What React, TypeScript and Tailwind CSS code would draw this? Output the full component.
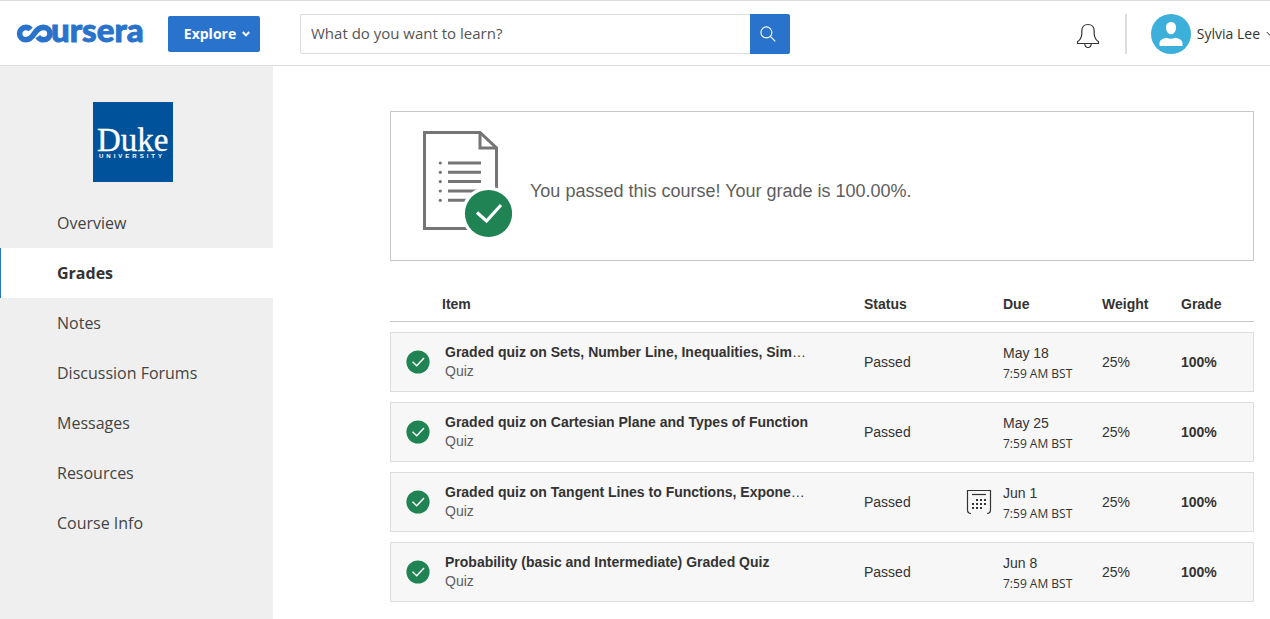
import type { ReactNode } from "react";

type Quiz = { title: string; date: string; shortened?: boolean; rescheduled?: boolean };

const QUIZZES: Quiz[] = [
  { title: "Graded quiz on Sets, Number Line, Inequalities, Sim", date: "May 18", shortened: true },
  { title: "Graded quiz on Cartesian Plane and Types of Function", date: "May 25" },
  { title: "Graded quiz on Tangent Lines to Functions, Expone", date: "Jun 1", shortened: true, rescheduled: true },
  { title: "Probability (basic and Intermediate) Graded Quiz", date: "Jun 8" },
];

const NAV = ["Overview", "Grades", "Notes", "Discussion Forums", "Messages", "Resources", "Course Info"];

function CourseraLogo() {
  return (
    <svg width="128" height="20" viewBox="0 0 128 20" role="img" aria-label="Coursera" className="block shrink-0 overflow-visible">
      <path
        d="M14.600 5.500C13.400 4.100 11.700 3.400 9.900 3.400C6.300 3.400 3.600 6.200 3.600 9.600C3.600 13 6.300 15.800 9.900 15.800C13.600 15.800 15.900 13.500 18.400 9.600C20.800 5.800 23.300 3.400 27.600 3.400C31.300 3.400 34 6.200 34 9.600C34 13 31.300 15.800 27.600 15.800C25.300 15.800 23.300 14.900 21.800 12.600"
        fill="none"
        stroke="#2a73cc"
        strokeWidth="5.600"
      />
      <text x="35" y="18" fill="#2a73cc" stroke="#2a73cc" strokeWidth="0.900" className="font-['Lato',sans-serif] text-[33px] font-black">
        ursera
      </text>
    </svg>
  );
}

function DukeLogo() {
  return (
    <svg width="80" height="80" viewBox="0 0 80 80" role="img" aria-label="Duke University">
      <rect width="80" height="80" fill="#00539b" />
      <text x="4" y="49" fill="#fff" stroke="#fff" strokeWidth="0.300" className="font-['Liberation_Serif',serif] text-[33px]">Duke</text>
      <text x="6" y="56" fill="#fff" className="font-['Liberation_Sans',sans-serif] text-[6px] font-bold tracking-[3px]">UNIVERSITY</text>
    </svg>
  );
}

function BellIcon() {
  return (
    <svg width="24" height="26" viewBox="0 0 24 26" fill="none" stroke="#333" strokeWidth="1.200" aria-hidden="true">
      <path d="M1.500 20.500V18.800C4.600 16.600 5.600 14.500 5.800 11V8C5.800 4.100 8.300 1.500 12 1.500S18.200 4.100 18.200 8V11C18.400 14.500 19.400 16.600 22.500 18.800V20.500Z" />
      <path d="M8.700 20.500C8.900 23 10.200 24.500 12 24.500S15.100 23 15.300 20.500" />
    </svg>
  );
}

function SearchIcon() {
  return (
    <svg width="16" height="16" viewBox="0 0 17.500 17.500" fill="none" stroke="#fff" strokeWidth="1.200" aria-hidden="true">
      <circle cx="7" cy="7" r="6" />
      <path d="M11.300 11.300L16.700 16.700" />
    </svg>
  );
}

function Avatar() {
  return (
    <svg width="40" height="40" viewBox="0 0 40 40" className="shrink-0" aria-hidden="true">
      <circle cx="20" cy="20" r="20" fill="#3dafdb" />
      <path d="M20 8C23.200 8 25 10.300 25 13.500C25 17 23 20.300 20 20.300S15 17 15 13.500C15 10.300 16.800 8 20 8Z" fill="#fff" />
      <path d="M8.500 32V29.500C8.500 26.300 11.200 24.800 15.500 23.800C18 25 22 25 24.500 23.800C28.800 24.800 31.500 26.300 31.500 29.500V32Z" fill="#fff" />
    </svg>
  );
}

function Chevron({ className }: { className: string }) {
  return (
    <svg width="8" height="6" viewBox="0 0 8 6" fill="none" stroke="currentColor" className={className} aria-hidden="true">
      <path d="M0.800 1L4 4.400L7.200 1" />
    </svg>
  );
}

function CheckBadge() {
  return (
    <svg width="24" height="24" viewBox="0 0 24 24" className="block" role="img" aria-label="Completed">
      <circle cx="12" cy="12" r="11.600" fill="#1f8354" />
      <path d="M6.500 11.800L10.700 15.700L18 8" fill="none" stroke="#fff" strokeWidth="1.500" />
    </svg>
  );
}

function ReportIcon() {
  return (
    <svg width="90" height="108" viewBox="0 0 90 108" className="shrink-0" aria-hidden="true">
      <g fill="none" stroke="#757575" strokeWidth="3">
        <path d="M2.500 2.500H58L74.500 18V98.500H2.500Z" />
        <path d="M58 2.500V18H74.500" />
        <path d="M26 33H59M26 42.300H59M26 51.600H59M26 61H59M26 70.300H59" />
      </g>
      <g fill="#757575">
        <circle cx="18.300" cy="33" r="1.600" />
        <circle cx="18.300" cy="42.300" r="1.600" />
        <circle cx="18.300" cy="51.600" r="1.600" />
        <circle cx="18.300" cy="61" r="1.600" />
        <circle cx="18.300" cy="70.300" r="1.600" />
      </g>
      <circle cx="66.500" cy="83.500" r="27" fill="#fff" />
      <circle cx="66.500" cy="83.500" r="23.600" fill="#1f8354" />
      <path d="M55 82.500L64.500 91L79 75" fill="none" stroke="#fff" strokeWidth="3.200" />
    </svg>
  );
}

function CalendarIcon() {
  return (
    <svg width="26" height="26" viewBox="0 0 26 26" fill="none" stroke="#333" className="block" aria-hidden="true">
      <path d="M5 24.500C2.500 24.500 1.500 23 1.500 20.500V1.500H24.500V20.500C24.500 23 23.500 24.500 21 24.500" strokeWidth="1.200" />
      <path d="M6 5.500H20" strokeWidth="1.200" />
      <path d="M10 11H20M6 15H20M6 19H16" strokeWidth="2" strokeDasharray="2 2" />
    </svg>
  );
}

function HeaderCell({ children }: { children?: ReactNode }) {
  return (
    <th scope="col" className="border-b border-[#c7c7c7] pt-0.5 text-left font-bold">
      {children}
    </th>
  );
}

export default function App() {
  return (
    <div className="flex min-h-screen flex-col overflow-x-hidden bg-white font-['Open_Sans',sans-serif] text-[#333]">
      <header className="flex h-[66px] items-center border-y border-[#ddd] pt-0.5 pl-4">
        <a href="#home"><CourseraLogo /></a>
        <button className="ml-6 flex h-9 w-[92px] shrink-0 items-center justify-center gap-1.5 rounded-xs bg-[#2a73cc] pl-1.5 text-sm font-bold text-white">
          Explore
          <Chevron className="stroke-2" />
        </button>
        <form role="search" className="ml-10 flex h-10 w-[490px]" onSubmit={(e) => e.preventDefault()}>
          <input
            type="search"
            aria-label="Search courses"
            placeholder="What do you want to learn?"
            className="min-w-0 flex-1 rounded-l-xs border border-r-0 border-[#ddd] px-2.5 pb-0.5 text-[15px] outline-none placeholder:text-[#555]"
          />
          <button aria-label="Search" className="flex w-10 items-center justify-center rounded-r-xs bg-[#2a73cc] pr-1">
            <SearchIcon />
          </button>
        </form>
        <div className="ml-auto flex shrink-0 items-center">
          <button aria-label="Notifications" className="pt-1"><BellIcon /></button>
          <div className="ml-[25px] h-10 w-0.5 bg-[#ddd]" />
          <button className="-mr-1 ml-6 flex items-center gap-1.5 text-sm">
            <Avatar />
            Sylvia Lee
            <Chevron className="stroke-1" />
          </button>
        </div>
      </header>
      <div className="flex flex-1">
        <aside className="w-[273px] shrink-0 bg-[#efefef] pt-9">
          <a href="#duke" className="flex justify-center pr-[7px]"><DukeLogo /></a>
          <nav className="mt-4">
            {NAV.map((label) => (
              <a
                key={label}
                href={"#" + label}
                aria-current={label === "Grades" ? "page" : undefined}
                className="flex h-[50px] items-center border-l border-transparent pl-14 text-base text-[#444] aria-[current=page]:border-[#2a73cc] aria-[current=page]:bg-white aria-[current=page]:font-bold aria-[current=page]:text-[#333]"
              >
                {label}
              </a>
            ))}
          </nav>
        </aside>
        <main className="min-w-0 flex-1 pr-4 pl-[117px] pt-[45px] font-['Liberation_Sans',sans-serif]">
          <section className="flex min-h-[150px] items-start border border-[#c7c7c7] pl-[31px] pt-[18px]">
            <ReportIcon />
            <p className="ml-[18px] mt-[47px] text-lg text-[#5e5e5e]">You passed this course! Your grade is 100.00%.</p>
          </section>
          <table className="mt-6 w-full table-fixed border-separate border-spacing-0 text-sm">
            <colgroup>
              <col className="w-[52px]" />
              <col />
              <col className="w-[92px]" />
              <col className="w-[47px]" />
              <col className="w-[99px]" />
              <col className="w-[79px]" />
              <col className="w-[73px]" />
            </colgroup>
            <thead>
              <tr className="h-[37px]">
                <HeaderCell />
                <HeaderCell>Item</HeaderCell>
                <HeaderCell>Status</HeaderCell>
                <HeaderCell />
                <HeaderCell>Due</HeaderCell>
                <HeaderCell>Weight</HeaderCell>
                <HeaderCell>Grade</HeaderCell>
              </tr>
            </thead>
            {QUIZZES.map((quiz) => (
              <tbody key={quiz.title}>
                <tr className="h-2.5" aria-hidden="true"><td colSpan={7} /></tr>
                <tr className="h-[60px] *:border-y *:border-[#ddd] *:bg-[#f7f7f7] *:p-0">
                  <td className="border-l"><div className="pl-[15px]"><CheckBadge /></div></td>
                  <td>
                    <div className="pl-[3px] leading-[19px]">
                      <a href="#quiz" className="block font-bold">
                        {quiz.title}
                        {quiz.shortened && <span className="font-normal">…</span>}
                      </a>
                      <div className="text-[#5e5e5e]">Quiz</div>
                    </div>
                  </td>
                  <td>Passed</td>
                  <td>{quiz.rescheduled && <div className="pl-2.5"><CalendarIcon /></div>}</td>
                  <td>
                    <div className="pt-1">{quiz.date}</div>
                    <div className="font-['Open_Sans',sans-serif] text-xs leading-[22px]">7:59 AM BST</div>
                  </td>
                  <td>25%</td>
                  <td className="border-r font-bold">100%</td>
                </tr>
              </tbody>
            ))}
          </table>
        </main>
      </div>
    </div>
  );
}
